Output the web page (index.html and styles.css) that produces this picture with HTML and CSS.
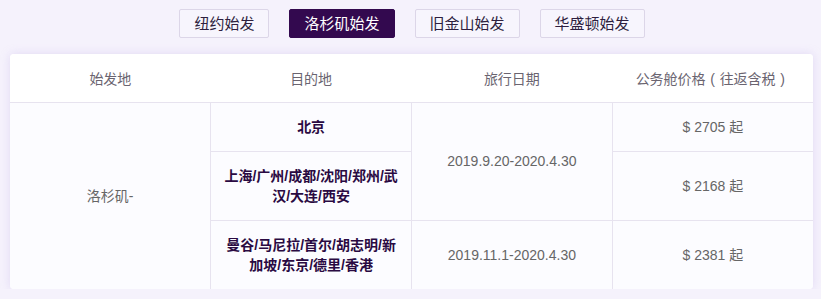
FILE: index.html
```html
<!DOCTYPE html>
<html lang="zh-CN">
<head>
<meta charset="utf-8">
<title>公务舱价格</title>
<link rel="stylesheet" href="styles.css">
</head>
<body>
<div class="page">
  <div class="tabs">
    <button class="tab">纽约始发</button>
    <button class="tab active">洛杉矶始发</button>
    <button class="tab">旧金山始发</button>
    <button class="tab">华盛顿始发</button>
  </div>
  <div class="card">
    <table class="fares">
      <thead>
        <tr class="head-row">
          <th>始发地</th>
          <th>目的地</th>
          <th>旅行日期</th>
          <th>公务舱价格<span class="paren">(</span>往返含税<span class="paren">)</span></th>
        </tr>
      </thead>
      <tbody>
        <tr class="row-a">
          <td rowspan="3" class="origin">洛杉矶-</td>
          <td class="dest">北京</td>
          <td rowspan="2" class="date">2019.9.20-2020.4.30</td>
          <td class="price">$ 2705 起</td>
        </tr>
        <tr class="row-b">
          <td class="dest">上海/广州/成都/沈阳/郑州/武汉/大连/西安</td>
          <td class="price">$ 2168 起</td>
        </tr>
        <tr class="row-b last">
          <td class="dest">曼谷/马尼拉/首尔/胡志明/新加坡/东京/德里/香港</td>
          <td class="date">2019.11.1-2020.4.30</td>
          <td class="price">$ 2381 起</td>
        </tr>
      </tbody>
    </table>
  </div>
</div>
</body>
</html>
```

FILE: styles.css
```css
* { box-sizing: border-box; }
html, body {
  margin: 0;
  padding: 0;
  background: #f5f2fc;
}
body {
  font-family: "Liberation Sans", "Noto Sans CJK SC", sans-serif;
  color: #666;
}
.page {
  width: 803px;
  margin-left: 10px;
  padding-top: 9px;
}
.tabs {
  display: flex;
  justify-content: center;
  gap: 20px;
  margin-left: 1px;
}
.tab {
  height: 29px;
  padding: 0 14px;
  border: 1px solid #dcd6e8;
  border-radius: 2px;
  background: #f7f5fd;
  color: #2e1f3f;
  font-family: "Liberation Sans", "Noto Sans CJK SC", sans-serif;
  font-size: 15px;
  line-height: 27px;
  cursor: pointer;
}
.tab.active {
  background: #33094f;
  border-color: #33094f;
  color: #fff;
}
.card {
  margin-top: 16px;
  background: #fff;
  border-radius: 4px;
  box-shadow: 0 0 10px rgba(190, 170, 230, 0.35);
  overflow: hidden;
}
.fares {
  width: 100%;
  border-collapse: collapse;
  table-layout: fixed;
  font-size: 14px;
}
.fares th {
  height: 48px;
  font-weight: normal;
  color: #6a6470;
  background: #fff;
  border-bottom: 1px solid #e7e3ef;
  padding: 0;
}
.paren {
  display: inline-block;
  width: 14px;
  text-align: center;
}
.fares td {
  background: #fcfcff;
  text-align: center;
  vertical-align: middle;
  border: 1px solid #e7e3ef;
  padding: 0 10px;
  line-height: 20px;
}
.fares tr td:first-child { border-left: none; }
.fares tr td:last-child { border-right: none; }
.fares tr.last td, .fares td.origin { border-bottom: none; }
.row-a { height: 49px; }
.row-b { height: 69px; }
.dest {
  font-weight: bold;
  color: #2a0a42;
}
.origin, .date, .price {
  color: #666;
}
```
